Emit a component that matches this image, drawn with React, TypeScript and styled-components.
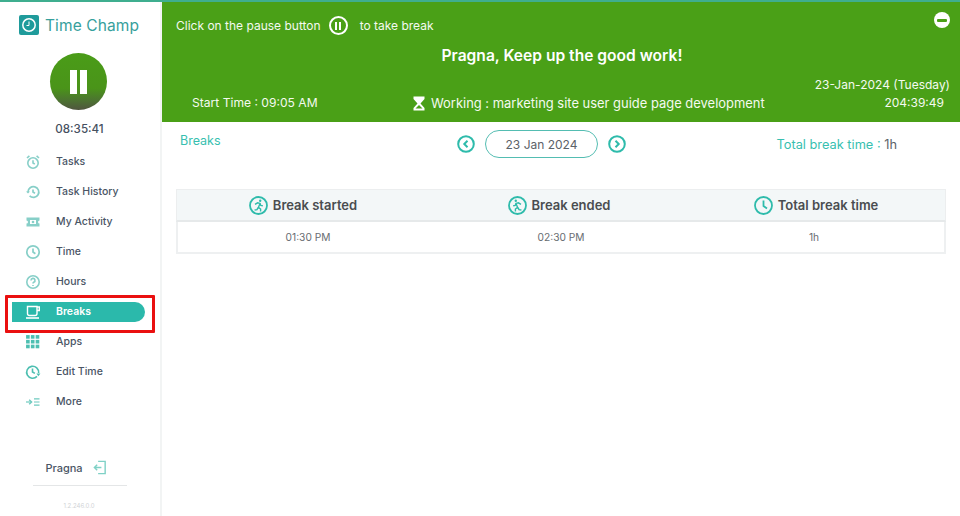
import React from "react";
import styled, { createGlobalStyle } from "styled-components";

const Global = createGlobalStyle`
  html, body { margin: 0; padding: 0; background: #fff; }
  body { font-family: Inter, "Open Sans", "Liberation Sans", sans-serif; }
  * { box-sizing: border-box; }
`;

const Page = styled.div`
  width: 960px; height: 516px; display: flex; overflow: hidden;
  border-top: 2px solid #3fae8f; background: #fff;
`;
const Sidebar = styled.aside`
  width: 162px; flex: none; display: flex; flex-direction: column; align-items: stretch;
  border-right: 2px solid #f2f4f4;
`;
const Brand = styled.div`
  display: flex; align-items: center; gap: 6px; height: 20px; margin: 13px 0 0 19px;
`;
const BrandName = styled.span`
  font-size: 15.5px; color: #37a09c; letter-spacing: 0.1px; white-space: nowrap;
`;
const PauseButton = styled.div`
  width: 57px; height: 57px; border-radius: 50%; margin: 18px 0 0 50px;
  background: linear-gradient(180deg, #4a9c18 0%, #4a9419 62%, #4c7530 82%, #50553f 100%);
  display: flex; align-items: center; justify-content: center; gap: 2.5px;
`;
const PauseBar = styled.span`
  width: 7.5px; height: 24px; background: #fff;
`;
const Clock = styled.div`
  margin-top: 12px; text-align: center; font-size: 11.6px; font-weight: 500; color: #46505f; padding-right: 1px;
`;
const Nav = styled.nav`
  margin-top: 11px; display: flex; flex-direction: column;
`;
const NavRow = styled.div`
  position: relative; height: 30px; display: flex; align-items: center; padding-left: 25px;
`;
const ActivePill = styled.div`
  height: 20px; width: 133px; margin-left: -13px; padding-left: 13px; display: flex; align-items: center;
  background: #2bb9ab; border-radius: 0 10px 10px 0;
`;
const NavIcon = styled.span`
  width: 16px; height: 16px; flex: none; display: flex; align-items: center; justify-content: center;
`;
const NavLabel = styled.span<{ $active?: boolean }>`
  margin-left: 15px; padding-bottom: 2px; font-size: 10.5px; font-weight: ${p => (p.$active ? 600 : 500)};
  color: ${p => (p.$active ? "#fff" : "#4a5565")}; white-space: nowrap;
`;
const Highlight = styled.div`
  position: absolute; left: 5px; top: -2px; width: 150px; height: 38px; border: 3px solid #ea1010; border-radius: 1px;
  pointer-events: none;
`;
const SideFooter = styled.div`
  margin-top: auto; display: flex; flex-direction: column; align-items: center;
`;
const User = styled.div`
  display: flex; align-items: center; gap: 10px; font-size: 11px; font-weight: 500; color: #4a5565; padding-right: 8px;
`;
const Divider = styled.div`
  width: 94px; height: 1px; background: #e4e6e7; margin-top: 10px;
`;
const Version = styled.div`
  font-size: 6px; color: #d0d3d6; margin: 16px 0 7px; padding-right: 2px;
`;

const Main = styled.main`
  flex: 1; min-width: 0; display: flex; flex-direction: column;
`;
const Banner = styled.header`
  position: relative; height: 120px; background: #4aa017; color: #fff; padding: 13px 10px 0 14px; flex: none;
`;
const Hint = styled.div`
  display: flex; align-items: center; font-size: 12px; color: #f4faf0; height: 20px;
`;
const HintPause = styled.span`
  width: 19px; height: 19px; border: 2px solid #fff; border-radius: 50%; margin: 1px 12px 0 8px;
  display: flex; align-items: center; justify-content: center; gap: 2px;
`;
const HintBar = styled.span`
  width: 2px; height: 8px; background: #fff;
`;
const Greeting = styled.h1`
  margin: 11px 0 0; text-align: center; font-size: 15.6px; font-weight: 600; line-height: 20px; padding-right: 2px;
`;
const BannerBottom = styled.div`
  display: flex; align-items: flex-end; margin-top: 10px; font-size: 12.1px; color: #f4faf0;
`;
const StartTime = styled.span`
  margin-left: 16px; width: 220px; white-space: nowrap; line-height: 18px;
`;
const Working = styled.span`
  display: flex; align-items: center; gap: 5px; white-space: nowrap; line-height: 18px; font-size: 12.95px;
`;
const DateBlock = styled.div`
  margin-left: auto; display: flex; flex-direction: column; align-items: flex-end; font-size: 12px; line-height: 18px;
`;
const Elapsed = styled.span`
  margin-right: 6px;
`;
const Minimize = styled.div`
  position: absolute; right: 10px; top: 10px; width: 16px; height: 16px; border-radius: 50%; background: #fff;
  display: flex; align-items: center; justify-content: center;
  &::after { content: ""; width: 10px; height: 3px; background: #4aa017; border-radius: 1px; }
`;

const Content = styled.section`
  padding: 8px 15px 0 14px;
`;
const ToolRow = styled.div`
  display: grid; grid-template-columns: 281px auto 1fr; align-items: flex-start; height: 59px;
`;
const SectionTitle = styled.div`
  font-size: 12.5px; color: #38bfb0; margin: 3px 0 0 4px;
`;
const DateNav = styled.div`
  display: flex; align-items: center; gap: 10px;
`;
const DatePill = styled.div`
  width: 113px; height: 28px; border: 1px solid #54bdb2; border-radius: 14px; font-size: 12px; color: #5c6268;
  display: flex; align-items: center; justify-content: center;
`;
const Total = styled.div`
  justify-self: end; font-size: 12.8px; color: #38bfb0; margin: 7px 48px 0 0; white-space: nowrap;
`;
const TotalValue = styled.span`
  color: #5c6268;
`;
const Table = styled.div`
  display: flex; flex-direction: column; width: 770px;
`;
const HeadRow = styled.div`
  display: grid; grid-template-columns: 252px 260px 254px; height: 33px; background: #f3f7f8;
  border: 1px solid #eceeef; border-bottom: 2px solid #e6e9ea;
`;
const HeadCell = styled.div`
  display: flex; align-items: center; justify-content: center; gap: 5px; font-size: 13px; font-weight: 600; color: #4a4d50;
`;
const BodyRow = styled.div`
  display: grid; grid-template-columns: 260px 246px 260px; height: 32px; background: #fff;
  border: 2px solid #eef0f1; border-top: 0;
`;
const BodyCell = styled.div`
  display: flex; align-items: center; justify-content: center; font-size: 10.2px; color: #686d72;
`;

const C = "#87cfc8";
const T = "#2ebbab";
const NAV: [string, React.ReactNode][] = [
  ["Tasks", <svg width="16" height="16" viewBox="0 0 16 16" fill="none" stroke={C} strokeWidth="1.6"><circle cx="8" cy="9" r="5.2"/><path d="M8 6.2V9l1.8 1.2M2 4l2.4-2.2M14 4l-2.4-2.2"/></svg>],
  ["Task History", <svg width="16" height="16" viewBox="0 0 16 16" fill="none" stroke={C} strokeWidth="1.7"><path d="M3 8a5.4 5.4 0 1 1 1.6 3.9"/><path d="M1 7.4h4L3 9.6z" fill={C} stroke="none"/><path d="M8 5.4V8l2 1.2"/></svg>],
  ["My Activity", <svg width="16" height="16" viewBox="0 0 16 16" fill={C}><path d="M1.5 3.5h13v3a1.5 1.5 0 0 0 0 3v3h-13v-3a1.5 1.5 0 0 0 0-3z"/><path d="M5 6h6v4H5z" fill="#fff"/><circle cx="8" cy="8" r="1.3"/></svg>],
  ["Time", <svg width="16" height="16" viewBox="0 0 16 16" fill="none" stroke={C} strokeWidth="1.7"><circle cx="8" cy="8" r="6.2"/><path d="M8 4.4V8l2.4 1.8"/></svg>],
  ["Hours", <svg width="16" height="16" viewBox="0 0 16 16" fill="none" stroke={C} strokeWidth="1.6"><circle cx="8" cy="8" r="6.2"/><path d="M6 6.4a2 2 0 1 1 2.8 1.8c-.6.3-.8.7-.8 1.4M8 11v1"/></svg>],
];
const NAV2: [string, React.ReactNode][] = [
  ["Apps", <svg width="16" height="16" viewBox="0 0 15 15" fill="#4dbfb1">{[1,5.5,10].flatMap(y => [1,5.5,10].map(x => <rect key={`${x}-${y}`} x={x} y={y} width="3.4" height="3.4"/>))}</svg>],
  ["Edit Time", <svg width="16" height="16" viewBox="0 0 16 16" fill="none" stroke="#4dbfb1" strokeWidth="1.6"><path d="M12 12.4A6 6 0 1 1 13.6 9"/><path d="M7.5 4.6V8l2.4 1.4"/><path d="M11.4 9.6h4l-2 2.6z" fill="#4dbfb1" stroke="none"/></svg>],
  ["More", <svg width="16" height="16" viewBox="0 0 16 16" fill="none" stroke="#6ecabf" strokeWidth="1.2"><path d="M1 8h5"/><path d="M4.2 5.8 6.6 8l-2.4 2.2" strokeWidth="1.4"/><path d="M9 4.8h5.5M9 8h5.5M9 11.2h5.5"/></svg>],
];

const Runner = ({ flip }: { flip?: boolean }) => (
  <svg width="19" height="19" viewBox="0 0 19 19" fill="none" stroke={T} strokeWidth="1.8" style={flip ? { transform: "scaleX(-1)" } : undefined}>
    <circle cx="9.5" cy="9.5" r="8.5"/>
    <circle cx="11.2" cy="4.8" r="1.2" fill={T} stroke="none"/>
    <path d="M6 8.4l2.6-1.6 2.4.6-1.6 4 2.2 1.6v2.4M11 7.4l.8 2 2 .4M9 11.6l-1 2-2.4.4" strokeWidth="1.4"/>
  </svg>
);

export default function App() {
  return (
    <>
      <Global />
      <Page>
        <Sidebar>
          <Brand>
            <svg width="20" height="20" viewBox="0 0 20 20">
              <rect width="20" height="20" rx="2" fill="#1f9b9b"/>
              <circle cx="10" cy="10" r="6.2" fill="none" stroke="#fff" strokeWidth="1.5"/>
              <path d="M10 6.5V10.5H7.5" fill="none" stroke="#fff" strokeWidth="1"/>
            </svg>
            <BrandName>Time Champ</BrandName>
          </Brand>
          <PauseButton><PauseBar /><PauseBar /></PauseButton>
          <Clock>08:35:41</Clock>
          <Nav>
            {NAV.map(([label, icon]) => (
              <NavRow key={label}><NavIcon>{icon}</NavIcon><NavLabel>{label}</NavLabel></NavRow>
            ))}
            <NavRow>
              <Highlight />
              <ActivePill>
                <NavIcon>
                  <svg width="16" height="16" viewBox="0 0 16 16" fill="none" stroke="#fff" strokeWidth="1.4">
                    <path d="M2.5 2.5h9.5v7a2 2 0 0 1-2 2H4.500a2 2 0 0 1-2-2z"/>
                    <path d="M12 3h2.300v3.500H12"/>
                    <path d="M1 14h13" strokeWidth="1.600"/>
                  </svg>
                </NavIcon>
                <NavLabel $active>Breaks</NavLabel>
              </ActivePill>
            </NavRow>
            {NAV2.map(([label, icon]) => (
              <NavRow key={label}><NavIcon>{icon}</NavIcon><NavLabel>{label}</NavLabel></NavRow>
            ))}
          </Nav>
          <SideFooter>
            <User>
              Pragna
              <svg width="14" height="15" viewBox="0 0 14 16" fill="none" stroke="#7fd1c6" strokeWidth="1.500">
                <path d="M5 1.500h7.500v13H5M1 8h7.500M4 5 1 8l3 3"/>
              </svg>
            </User>
            <Divider />
            <Version>1.2.246.0.0</Version>
          </SideFooter>
        </Sidebar>
        <Main>
          <Banner>
            <Hint>
              Click on the pause button
              <HintPause><HintBar /><HintBar /></HintPause>
              to take break
            </Hint>
            <Greeting>Pragna, Keep up the good work!</Greeting>
            <BannerBottom>
              <StartTime>Start Time : 09:05 AM</StartTime>
              <Working>
                <svg width="14" height="15" viewBox="0 0 14 15" fill="#fff">
                  <path d="M1.500 0.500h11v2.500L8.500 7.500l4 4.500v2.500h-11V12l4-4.500-4-4.500z"/>
                  <path d="M3.500 12.500 7 9l3.500 3.500z" fill="#4aa017"/>
                </svg>
                Working : marketing site user guide page development
              </Working>
              <DateBlock>
                <span>23-Jan-2024 (Tuesday)</span>
                <Elapsed>204:39:49</Elapsed>
              </DateBlock>
            </BannerBottom>
            <Minimize />
          </Banner>
          <Content>
            <ToolRow>
              <SectionTitle>Breaks</SectionTitle>
              <DateNav>
                <svg width="18" height="18" viewBox="0 0 18 18" fill="none" stroke={T} strokeWidth="2"><circle cx="9" cy="9" r="7.800"/><path d="M10.500 5.800 7.300 9l3.200 3.200"/></svg>
                <DatePill>23 Jan 2024</DatePill>
                <svg width="18" height="18" viewBox="0 0 18 18" fill="none" stroke={T} strokeWidth="2"><circle cx="9" cy="9" r="7.800"/><path d="M7.500 5.800 10.700 9l-3.200 3.200"/></svg>
              </DateNav>
              <Total>Total break time : <TotalValue>1h</TotalValue></Total>
            </ToolRow>
            <Table>
              <HeadRow>
                <HeadCell><Runner />Break started</HeadCell>
                <HeadCell><Runner flip />Break ended</HeadCell>
                <HeadCell>
                  <svg width="19" height="19" viewBox="0 0 19 19" fill="none" stroke={T} strokeWidth="1.800"><circle cx="9.500" cy="9.500" r="8.500"/><path d="M9.500 4.500v5.500l3.500 2.500"/></svg>
                  Total break time
                </HeadCell>
              </HeadRow>
              <BodyRow>
                <BodyCell>01:30 PM</BodyCell>
                <BodyCell>02:30 PM</BodyCell>
                <BodyCell>1h</BodyCell>
              </BodyRow>
            </Table>
          </Content>
        </Main>
      </Page>
    </>
  );
}
